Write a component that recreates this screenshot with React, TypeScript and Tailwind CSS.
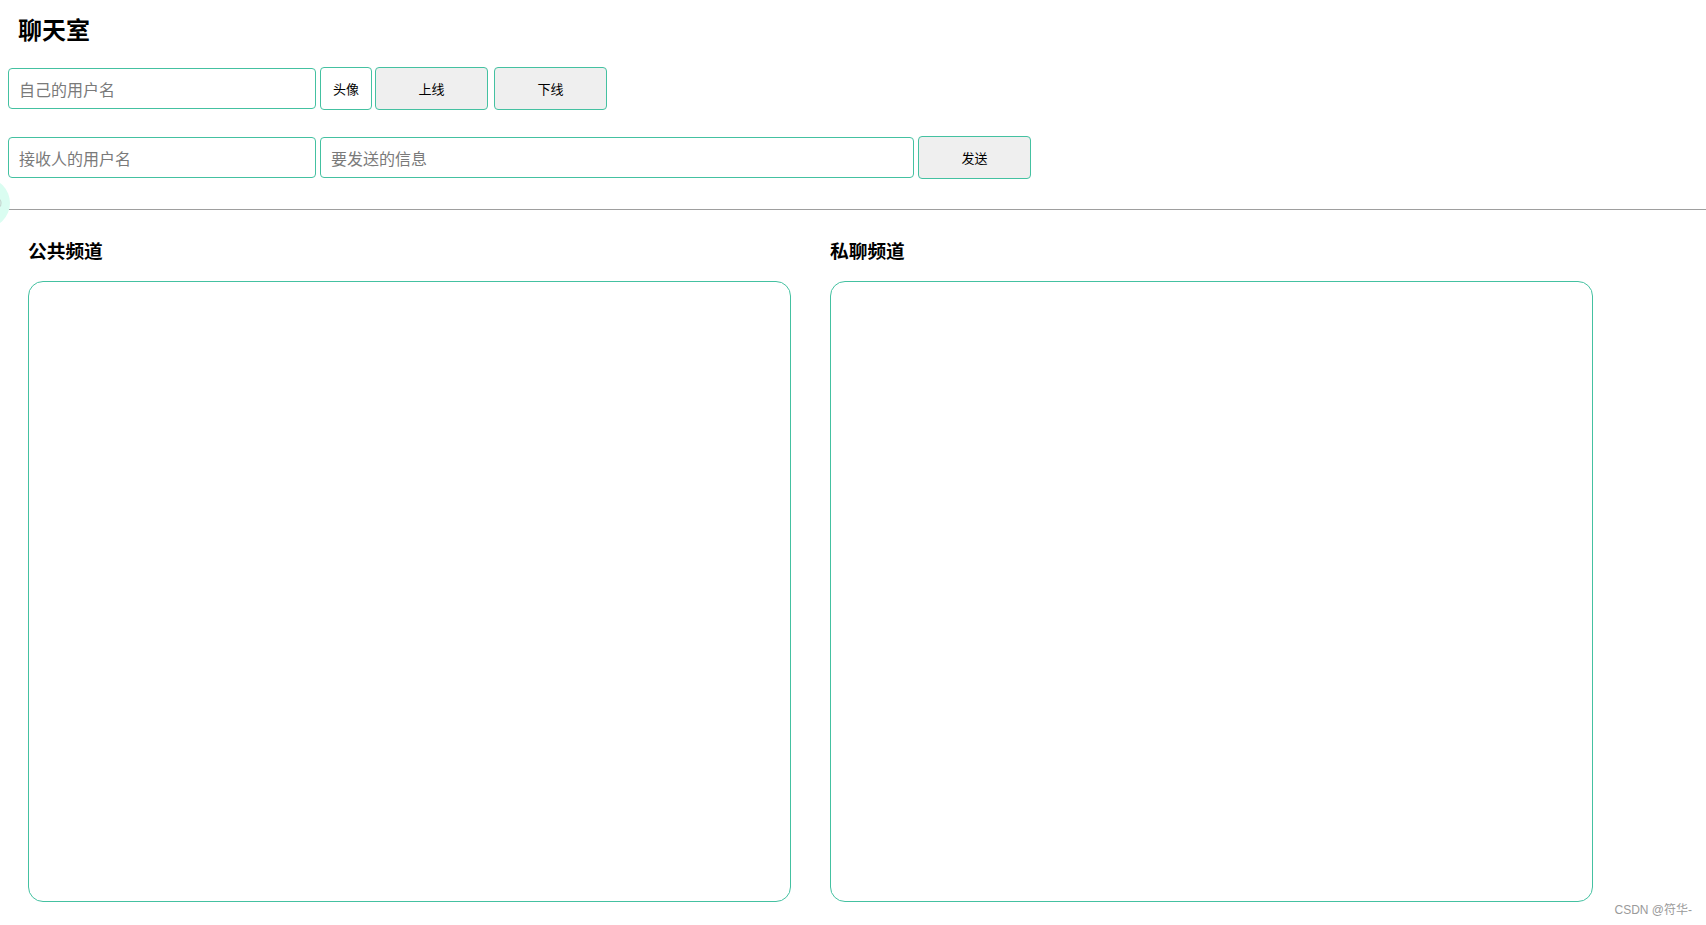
import React from 'react';

const cjk = { fontFamily: '"Noto Sans CJK SC", "Noto Sans", sans-serif' };

function Field({ placeholder, width }: { placeholder: string; width: string }) {
  return (
    <input
      placeholder={placeholder}
      className={`${width} h-[41px] rounded-[4px] border border-[#44c1a1] bg-white pl-[10px] text-[16px] text-black outline-none placeholder:text-[#7a7a7a]`}
      style={cjk}
    />
  );
}

function Btn({ label, width, light }: { label: string; width: string; light?: boolean }) {
  return (
    <button
      className={`${width} h-[43px] rounded-[4px] border border-[#44c1a1] text-[13px] text-black ${light ? 'bg-white' : 'bg-[#efefef]'}`}
      style={cjk}
    >
      {label}
    </button>
  );
}

function Channel({ title }: { title: string }) {
  return (
    <div className="flex w-[763px] flex-col">
      <h3 className="text-[18.72px] font-bold leading-[20px] text-black">{title}</h3>
      <div className="mt-[21px] h-[621px] rounded-[15px] border border-[#44c1a1]" />
    </div>
  );
}

export default function App() {
  return (
    <div className="relative min-h-[925px] w-full overflow-hidden bg-white" style={cjk}>
      {/* floating helper bubble at the left edge */}
      <div className="absolute left-[-40px] top-[178px] flex h-[50px] w-[50px] items-center justify-end rounded-full bg-[#dafdf1] pr-[6px]">
        <svg width="8" height="10" viewBox="0 0 8 10" fill="none" stroke="#c6d6d0" strokeWidth="1.2">
          <ellipse cx="2" cy="5" rx="3" ry="4" />
        </svg>
      </div>

      <h2 className="pl-[18px] pt-[17px] text-[24px] font-bold leading-[24px] text-black">聊天室</h2>

      <div className="mt-[26px] flex h-[43px] items-center pl-2">
        <Field placeholder="自己的用户名" width="w-[308px]" />
        <div className="ml-[4px]">
          <Btn label="头像" width="w-[52px]" light />
        </div>
        <div className="ml-[3px]">
          <Btn label="上线" width="w-[113px]" />
        </div>
        <div className="ml-[6px]">
          <Btn label="下线" width="w-[113px]" />
        </div>
      </div>

      <div className="mt-[26px] flex h-[43px] items-center pl-2">
        <Field placeholder="接收人的用户名" width="w-[308px]" />
        <div className="ml-[4px]">
          <Field placeholder="要发送的信息" width="w-[594px]" />
        </div>
        <div className="ml-[4px]">
          <Btn label="发送" width="w-[113px]" />
        </div>
      </div>

      <div className="ml-2 mt-[30px] h-px bg-[#9e9e9e]" />

      <div className="mt-[30px] flex gap-[39px] pl-[28px]">
        <Channel title="公共频道" />
        <Channel title="私聊频道" />
      </div>

      <div
        className="absolute bottom-[8px] right-[14px] text-[12px] leading-[14px] text-[#9a9a9a]"
        style={{ fontFamily: '"Liberation Sans", "Noto Sans CJK SC", sans-serif' }}
      >
        CSDN @符华-
      </div>
    </div>
  );
}
